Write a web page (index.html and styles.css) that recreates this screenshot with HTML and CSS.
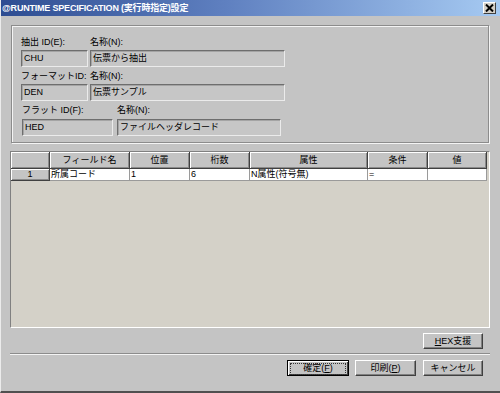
FILE: index.html
```html
<!DOCTYPE html>
<html lang="ja">
<head>
    <meta charset="UTF-8">
    <title>RUNTIME SPECIFICATION</title>
    <link rel="stylesheet" href="styles.css">
</head>
<body>

<div class="window">
    <div class="titlebar">
        <span class="title">@RUNTIME SPECIFICATION (実行時指定)設定</span>
        <span class="close">
            <svg width="9" height="8" viewBox="0 0 9 8"><path d="M1 0.5 L8 7.5 M8 0.5 L1 7.5" stroke="#000" stroke-width="2"/></svg>
        </span>
    </div>

    <div class="group">
        <div class="row row-a">
            <div class="cell"><div class="label">抽出 ID(E):</div><div class="field">CHU</div></div>
            <div class="cell"><div class="label">名称(N):</div><div class="field">伝票から抽出</div></div>
        </div>
        <div class="row row-b">
            <div class="cell"><div class="label">フォーマットID:</div><div class="field">DEN</div></div>
            <div class="cell"><div class="label">名称(N):</div><div class="field">伝票サンプル</div></div>
        </div>
        <div class="row row-c">
            <div class="cell"><div class="label">フラット ID(F):</div><div class="field">HED</div></div>
            <div class="cell"><div class="label">名称(N):</div><div class="field">ファイルヘッダレコード</div></div>
        </div>
    </div>

    <div class="grid">
        <div class="grid-head">
            <div class="hcell"></div>
            <div class="hcell">フィールド名</div>
            <div class="hcell">位置</div>
            <div class="hcell">桁数</div>
            <div class="hcell">属性</div>
            <div class="hcell">条件</div>
            <div class="hcell">値</div>
        </div>
        <div class="grid-row">
            <div class="rowhead">1</div>
            <div class="dcell">所属コード</div>
            <div class="dcell">1</div>
            <div class="dcell">6</div>
            <div class="dcell">N属性(符号無)</div>
            <div class="dcell">=</div>
            <div class="dcell"></div>
        </div>
    </div>

    <div class="hex-row">
        <button class="btn btn-hex"><u>H</u>EX支援</button>
    </div>

    <div class="separator"></div>

    <div class="actions">
        <button class="btn btn-ok"><span class="focus">確定(<u>F</u>)</span></button>
        <button class="btn btn-print">印刷(<u>P</u>)</button>
        <button class="btn btn-cancel">キャンセル</button>
    </div>
</div>

</body>
</html>
```
FILE: styles.css
```css
html, body {
    margin: 0;
    padding: 0;
    font-family: "Liberation Sans", "Noto Sans CJK JP", sans-serif;
    font-size: 9px;
    color: black;
}

.window {
    width: 500px;
    height: 393px;
    box-sizing: border-box;
    background: #c4c4c4;
    border-left: 1px solid #ececec;
    border-bottom: 2px solid #505050;
    display: flex;
    flex-direction: column;
    overflow: hidden;
}

/* title bar */
.titlebar {
    height: 16px;
    display: flex;
    align-items: center;
    justify-content: space-between;
    padding: 0 4px 0 1px;
    background: linear-gradient(to right, #2e4d92, #5f80c0 45%, #a6caf2);
    color: white;
    flex-shrink: 0;
}

.titlebar .title {
    font-size: 9px;
    line-height: 12px;
    font-weight: bold;
    letter-spacing: -0.2px;
}

.titlebar .close {
    width: 11px;
    height: 10px;
    background: #d4d0c8;
    border: 1px solid;
    border-color: #fff #404040 #404040 #fff;
    display: flex;
    align-items: center;
    justify-content: center;
}

/* group box */
.group {
    margin: 9px 0 0 10px;
    width: 478px;
    height: 118px;
    box-sizing: border-box;
    border: 1px solid #8c8c8c;
    box-shadow: inset 1px 1px 0 #f4f4f4, 1px 1px 0 #f4f4f4;
    padding: 10px 0 0 9px;
    flex-shrink: 0;
}

.row {
    display: grid;
    column-gap: 2px;
}

.row-a, .row-b {
    grid-template-columns: 67px 195px;
}

.row-b {
    margin-top: 3px;
}

.row-c {
    grid-template-columns: 91px 164px;
    column-gap: 4px;
    margin-top: 4px;
    margin-left: 1px;
}

.label {
    height: 12px;
    line-height: 12px;
    margin-bottom: 2px;
    white-space: nowrap;
}

.row-c .label {
    margin-top: -1px;
    margin-bottom: 3px;
}

.field {
    height: 17px;
    line-height: 15px;
    box-sizing: border-box;
    padding-left: 2px;
    border: 1px solid;
    border-color: #6e6e6e #ebebeb #ebebeb #6e6e6e;
    box-shadow: inset 1px 1px 0 #a4a4a4;
    background: #c6c6c6;
    white-space: nowrap;
}

/* list grid */
.grid {
    margin: 8px 0 0 9px;
    width: 480px;
    height: 177px;
    box-sizing: border-box;
    border: 1px solid;
    border-color: #808080 #fff #fff #808080;
    background: #d4d1c8;
    flex-shrink: 0;
}

.grid-head, .grid-row {
    display: grid;
    grid-template-columns: 39px 80px 60px 60px 118px 60px 59px;
}

.hcell, .rowhead {
    box-sizing: border-box;
    background: #c4c4c4;
    border-right: 1px solid #404040;
    border-bottom: 1px solid #404040;
    box-shadow: inset 1px 1px 0 #fff, inset -1px -1px 0 #8a8a8a;
    text-align: center;
}

.hcell {
    height: 17px;
    line-height: 16px;
}

.rowhead {
    height: 12px;
    line-height: 11px;
}

.dcell {
    height: 12px;
    line-height: 11px;
    box-sizing: border-box;
    background: white;
    border-right: 1px solid #9a9a9a;
    border-bottom: 1px solid #9a9a9a;
    padding-left: 1px;
    white-space: nowrap;
    overflow: hidden;
}

/* buttons */
.btn {
    font-family: "Liberation Sans", "Noto Sans CJK JP", sans-serif;
    font-size: 9px;
    color: black;
    background: #c4c4c4;
    border: 1px solid;
    border-color: #fff #404040 #404040 #fff;
    box-shadow: inset -1px -1px 0 #808080;
    padding: 0;
    margin: 0;
    height: 16px;
    line-height: 13px;
    box-sizing: border-box;
}

.hex-row {
    display: flex;
    justify-content: flex-end;
    margin: 5px 17px 0 0;
}

.btn-hex {
    width: 60px;
}

.separator {
    margin: 4px 0 0 9px;
    width: 480px;
    height: 1px;
    background: #8c8c8c;
    border-bottom: 1px solid #f4f4f4;
}

.actions {
    display: flex;
    justify-content: flex-end;
    margin: 5px 17px 0 0;
}

.btn-ok {
    width: 62px;
    border: 1px solid #000;
    box-shadow: inset 1px 1px 0 #fff, inset -1px -1px 0 #404040;
    padding: 2px;
    margin-right: 6px;
}

.btn-ok .focus {
    display: block;
    height: 10px;
    line-height: 9px;
    border: 1px dotted #333;
}

.btn-print {
    width: 61px;
    margin-right: 7px;
}

.btn-cancel {
    width: 60px;
}
```
